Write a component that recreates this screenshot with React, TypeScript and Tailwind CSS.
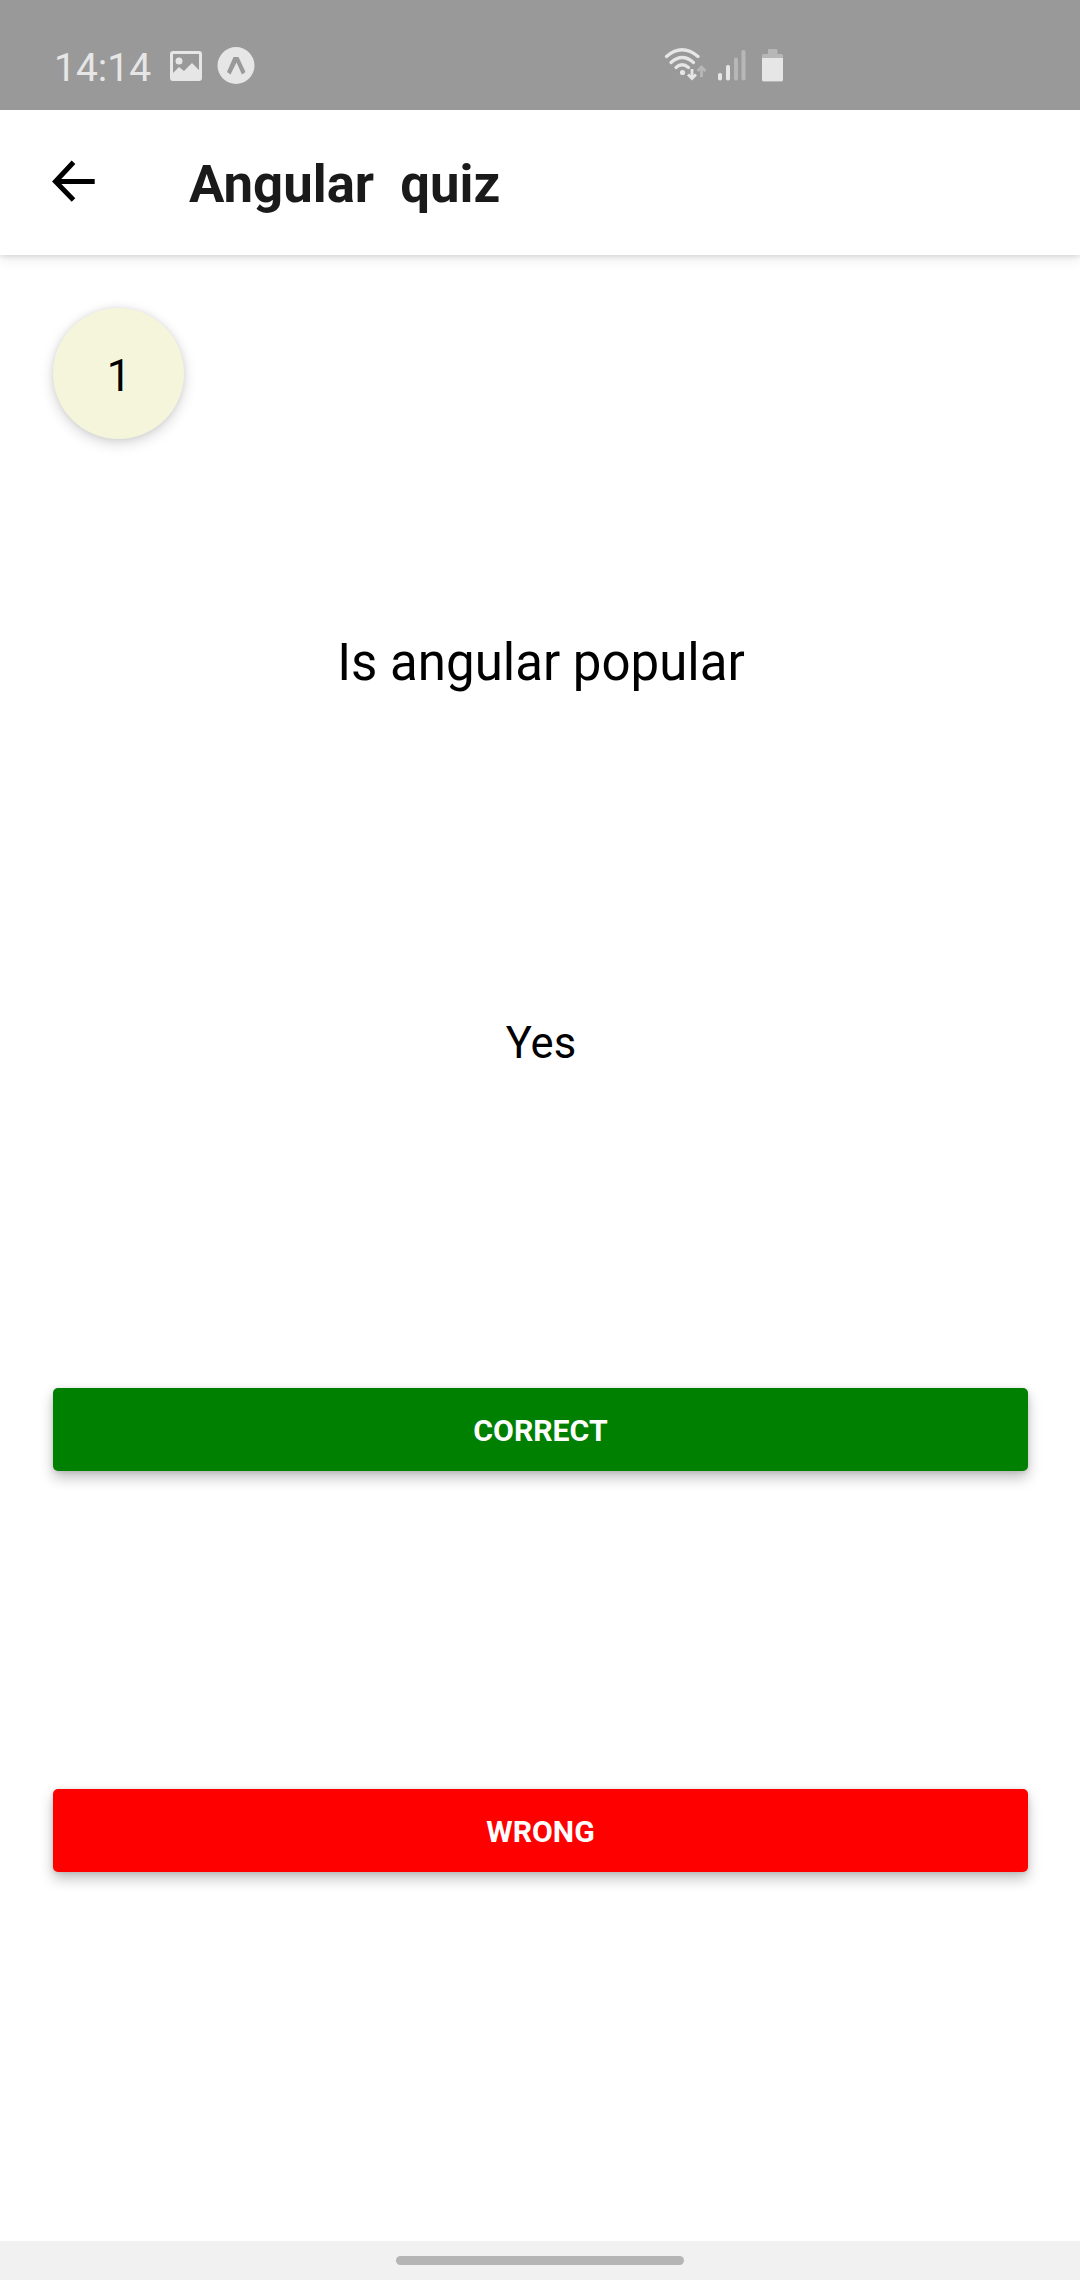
function StatusBar() {
  return (
    <div className="relative z-10 flex h-[110px] items-start bg-[#999999] text-[#e6e6e6]">
      <span className="ml-[54px] mt-[45px] h-[46px] w-[97px] whitespace-nowrap text-[39px] leading-[46px]">14:14</span>
      <svg className="ml-[19px] mt-[51px]" width="32" height="30" viewBox="0 0 32 30" fill="currentColor">
        <path fillRule="evenodd" d="M3 0H29Q32 0 32 3V27Q32 30 29 30H3Q0 30 0 27V3Q0 0 3 0ZM3 3V22L9 16L14 20L22 12L29 19V3ZM9 6.500A3.500 3.500 0 1 1 9 13.500A3.500 3.500 0 1 1 9 6.500Z" />
      </svg>
      <svg className="ml-[15px] mt-[47px]" width="38" height="38" viewBox="0 0 38 38">
        <circle cx="19" cy="18.500" r="18.500" fill="currentColor" />
        <path d="M10 25L16.500 10H21.500L28.500 25L25 27.500L19.500 15.500L13.500 27.500Z" fill="#999999" />
      </svg>
      <svg className="ml-[409px] mt-[46px]" width="44" height="36" viewBox="0 0 44 36" fill="none">
        <g stroke="#e6e6e6" strokeWidth="3.300" strokeLinecap="round">
          <path d="M2.500 10.500Q18 -3 34 10.500" />
          <path d="M7 16.500Q18 6.500 29.500 16.500" />
          <path d="M12 21.500Q18 16 24.500 21.500" />
        </g>
        <circle cx="18.500" cy="26.500" r="2.600" fill="#e6e6e6" />
        <path d="M28 23V32M24 28.500L28 32.500L32 28.500" stroke="#e6e6e6" strokeWidth="2.800" />
        <path d="M37.500 31V22M33.500 25L37.500 21L41.500 25" stroke="#b7b7b7" strokeWidth="2.800" />
      </svg>
      <svg className="ml-[10px] mt-[50px]" width="28" height="31" viewBox="0 0 28 31">
        <rect x="0" y="23" width="4" height="7.500" rx="1.800" fill="#e6e6e6" />
        <rect x="8" y="15" width="4" height="15.500" rx="1.800" fill="#e6e6e6" />
        <rect x="16" y="7.500" width="4" height="23" rx="1.800" fill="#b7b7b7" />
        <rect x="23.500" y="0" width="4" height="30.500" rx="1.800" fill="#b7b7b7" />
      </svg>
      <svg className="ml-[16px] mt-[49px]" width="22" height="34" viewBox="0 0 22 34">
        <path d="M6 5V1Q6 0 7 0H14Q15.500 0 15.500 1V5H19.500Q21 5 21 6.500V31Q21 33 19.500 33H1.500Q0 33 0 31V6.500Q0 5 1.500 5Z" fill="#b7b7b7" />
        <path d="M0 9H21V30.500Q21 32 19.500 32H1.500Q0 32 0 30.500Z" fill="#e6e6e6" />
      </svg>
    </div>
  );
}

function Header() {
  return (
    <header className="relative flex h-[145px] items-start bg-white shadow-[0_1px_5px_rgba(0,0,0,0.14),0_5px_12px_rgba(0,0,0,0.07)]">
      <svg className="ml-[52px] mt-[50px]" width="44" height="43" viewBox="0 0 44 43" fill="none">
        <path d="M21.500 2.200L3.500 21.500L21.500 40M4 21.500H42.700" stroke="#000000" strokeWidth="5" />
      </svg>
      <h1 className="ml-[93px] mt-[44px] whitespace-pre text-[52.7px] leading-[61px] font-bold text-[#1a1a1a]">Angular  quiz</h1>
    </header>
  );
}

export default function App() {
  return (
    <div className="flex h-[2280px] w-[1080px] flex-col overflow-hidden bg-white font-[Roboto,sans-serif] text-black">
      <StatusBar />
      <Header />
      <main className="flex flex-1 flex-col px-[53px]">
        <div className="mt-[53px] h-[131px] w-[131px] rounded-full bg-[#f5f5dc] text-center shadow-[0_4px_14px_rgba(0,0,0,0.17),0_0_6px_rgba(0,0,0,0.07)]">
          <span className="block pt-[44px] pl-px text-[43.5px] leading-[50px]">1</span>
        </div>
        <p className="mt-[193px] pl-[2px] text-center text-[51px] leading-[62px]">Is angular popular</p>
        <p className="mt-[325px] pl-[2px] text-center text-[43.5px] leading-[50px]">Yes</p>
        <button className="mt-[319px] h-[83px] w-[975px] shrink-0 rounded-[5px] bg-[#008000] pt-[2px] text-[30.2px] font-bold text-white shadow-[0_7px_14px_rgba(0,0,0,0.24),0_1px_5px_rgba(0,0,0,0.12)]">CORRECT</button>
        <button className="mt-[318px] h-[83px] w-[975px] shrink-0 rounded-[5px] bg-[#ff0000] pt-[2px] text-[30.2px] font-bold text-white shadow-[0_7px_14px_rgba(0,0,0,0.24),0_1px_5px_rgba(0,0,0,0.12)]">WRONG</button>
      </main>
      <div className="flex h-[39px] shrink-0 items-center justify-center bg-[#f1f1f1]">
        <div className="h-[9px] w-[288px] rounded-full bg-[#b5b5b5]" />
      </div>
    </div>
  );
}
